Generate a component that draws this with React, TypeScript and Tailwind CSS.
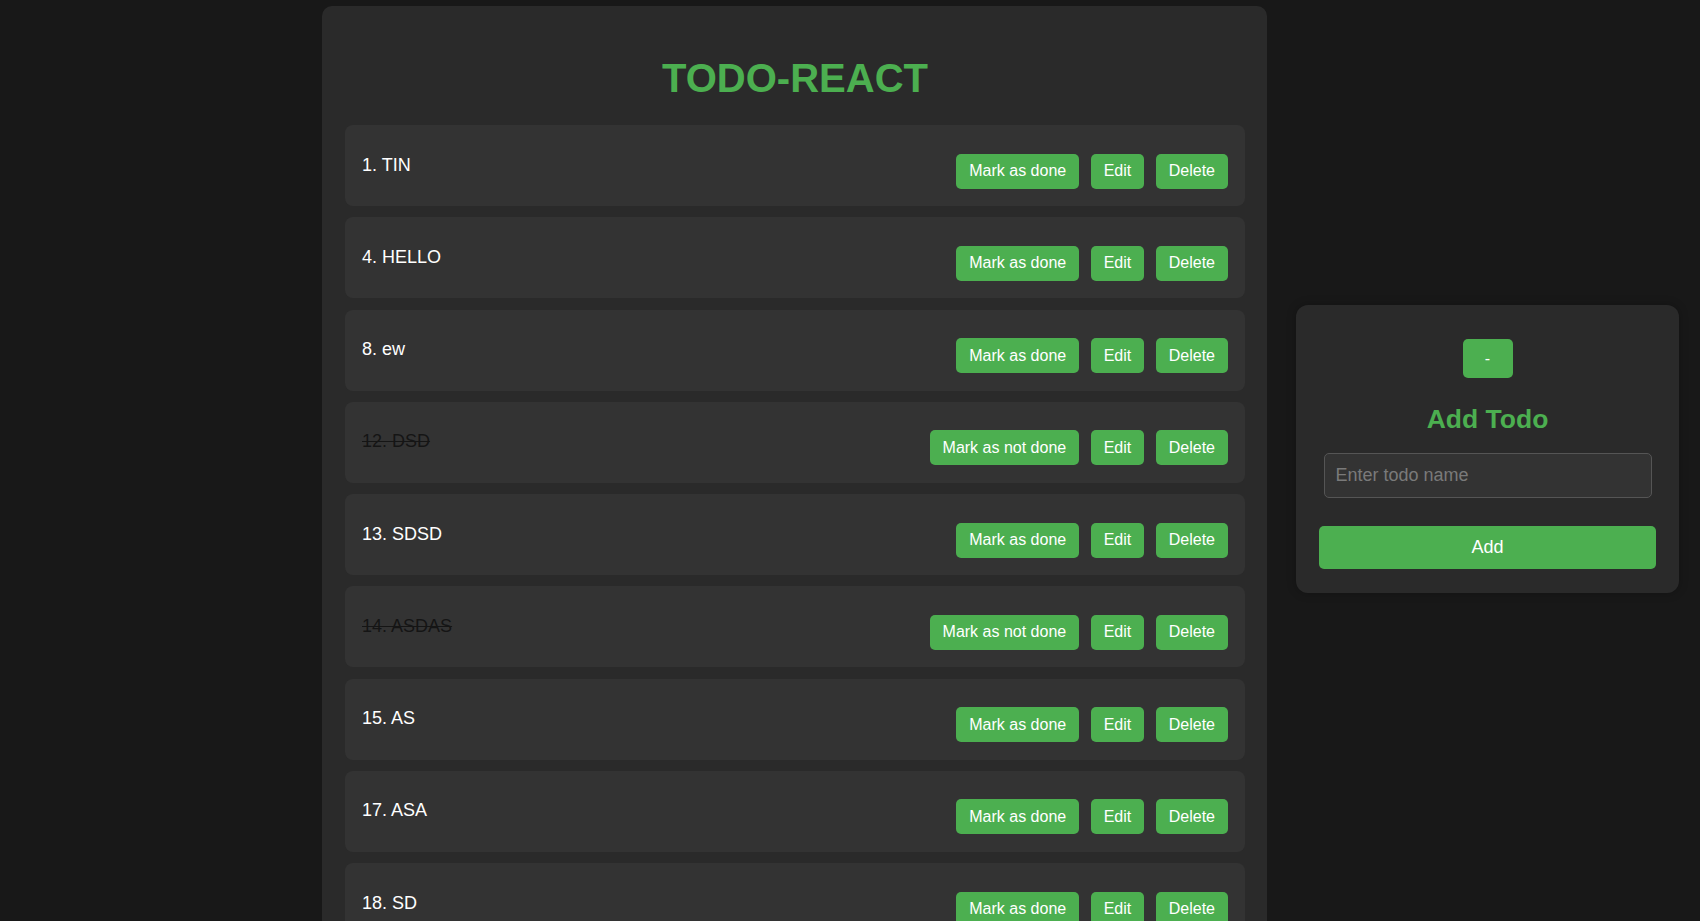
type Todo = { id: number; name: string; done: boolean };

const todos: Todo[] = [
  { id: 1, name: "TIN", done: false },
  { id: 4, name: "HELLO", done: false },
  { id: 8, name: "ew", done: false },
  { id: 12, name: "DSD", done: true },
  { id: 13, name: "SDSD", done: false },
  { id: 14, name: "ASDAS", done: true },
  { id: 15, name: "AS", done: false },
  { id: 17, name: "ASA", done: false },
  { id: 18, name: "SD", done: false },
];

function Btn({ children }: { children: React.ReactNode }) {
  return (
    <button className="h-[35px] px-[13px] rounded-[5px] bg-[#4caf50] text-white text-[16px] leading-none">
      {children}
    </button>
  );
}

function TodoItem({ todo }: { todo: Todo }) {
  return (
    <li className="flex justify-between items-start h-[81px] shrink-0 pt-[28.5px] pl-[17px] pr-[17px] rounded-[8px] bg-[#333333]">
      <span
        className={
          todo.done
            ? "mt-[1px] text-[18px] leading-[20.7px] text-[#151515] line-through"
            : "mt-[1px] text-[18px] leading-[20.7px] text-white"
        }
      >
        {todo.id}. {todo.name}
      </span>
      <div className="flex gap-[11.5px]">
        <Btn>{todo.done ? "Mark as not done" : "Mark as done"}</Btn>
        <Btn>Edit</Btn>
        <Btn>Delete</Btn>
      </div>
    </li>
  );
}

export default function App() {
  return (
    <div className="h-screen overflow-hidden bg-[#181818] font-['Liberation_Sans',Arial,sans-serif]">
      <div className="flex items-start">
        <main className="ml-[322px] mt-[6px] w-[945px] shrink-0 rounded-[10px] bg-[#2a2a2a] pl-[23px] pr-[22px] pt-[48.5px] pb-6">
          <h1 className="text-center text-[40px] leading-[46px] font-bold text-[#4caf50] mb-[24.5px]">
            TODO-REACT
          </h1>
          <ul className="flex flex-col gap-[11.25px]">
            {todos.map((t) => (
              <TodoItem key={t.id} todo={t} />
            ))}
          </ul>
        </main>

        <aside className="ml-[29px] mt-[305px] w-[383px] shrink-0 rounded-[12px] bg-[#2a2a2a] shadow-[0_0_10px_rgba(0,0,0,0.25)] flex flex-col items-center pt-[34px] pb-[23px]">
          <button className="w-[50px] h-[39px] rounded-[5px] bg-[#4caf50] text-white text-[16px] leading-none">
            -
          </button>
          <h2 className="mt-[26px] text-[26.5px] leading-[30.5px] font-bold text-[#4caf50]">
            Add Todo
          </h2>
          <input
            className="mt-[18px] w-[328px] h-[45px] rounded-[5px] border border-[#555555] bg-[#333333] px-[11px] text-[18px] text-white placeholder:text-[#7a7a7a] outline-none"
            placeholder="Enter todo name"
          />
          <button className="mt-[28px] w-[337px] h-[43px] rounded-[5px] bg-[#4caf50] text-white text-[18px] leading-none">
            Add
          </button>
          <div className="h-[1px]" />
        </aside>
      </div>
    </div>
  );
}
